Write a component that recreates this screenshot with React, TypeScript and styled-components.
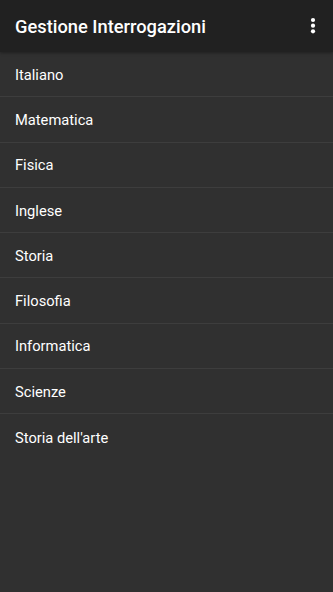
import React from "react";
import styled, { createGlobalStyle } from "styled-components";

const Global = createGlobalStyle`
  html, body { margin: 0; padding: 0; background: #303030; }
  body { font-family: Roboto, "Noto Sans", "Liberation Sans", sans-serif; -webkit-font-smoothing: antialiased; }
`;

const Screen = styled.div`
  width: 333px;
  height: 592px;
  display: flex;
  flex-direction: column;
  background: #303030;
  overflow: hidden;
`;

const Toolbar = styled.header`
  height: 52px;
  flex: 0 0 52px;
  background: #212121;
  display: flex;
  align-items: center;
  justify-content: space-between;
  padding: 0 9px 0 15px;
  box-shadow: 0 1px 3px rgba(0, 0, 0, 0.35);
  position: relative;
  z-index: 1;
`;

const Title = styled.h1`
  margin: 0;
  color: #ffffff;
  font-size: 18.3px;
  font-weight: 500;
  letter-spacing: 0;
`;

const MenuButton = styled.button`
  width: 22px;
  height: 32px;
  border: 0;
  padding: 0;
  background: transparent;
  display: flex;
  align-items: center;
  justify-content: center;
`;

const List = styled.ul`
  list-style: none;
  margin: 0;
  padding: 0;
`;

const Row = styled.li`
  height: 45.3px;
  box-sizing: border-box;
  display: flex;
  align-items: center;
  padding: 1px 0 0 15px;
  color: #ffffff;
  font-size: 14.7px;
  border-bottom: 1px solid #3d3d3d;
`;

const LastRow = styled(Row)`
  border-bottom: none;
`;

const subjects = [
  "Italiano",
  "Matematica",
  "Fisica",
  "Inglese",
  "Storia",
  "Filosofia",
  "Informatica",
  "Scienze",
];

export default function App() {
  return (
    <>
      <Global />
      <Screen>
        <Toolbar>
          <Title>Gestione Interrogazioni</Title>
          <MenuButton aria-label="Menu">
            <svg width="6" height="18" viewBox="0 0 6 18">
              <circle cx="3" cy="3" r="2.1" fill="#fff" />
              <circle cx="3" cy="8.7" r="2.1" fill="#fff" />
              <circle cx="3" cy="14.3" r="2.1" fill="#fff" />
            </svg>
          </MenuButton>
        </Toolbar>
        <List>
          {subjects.map((s) => (
            <Row key={s}>{s}</Row>
          ))}
          <LastRow>Storia dell'arte</LastRow>
        </List>
      </Screen>
    </>
  );
}
